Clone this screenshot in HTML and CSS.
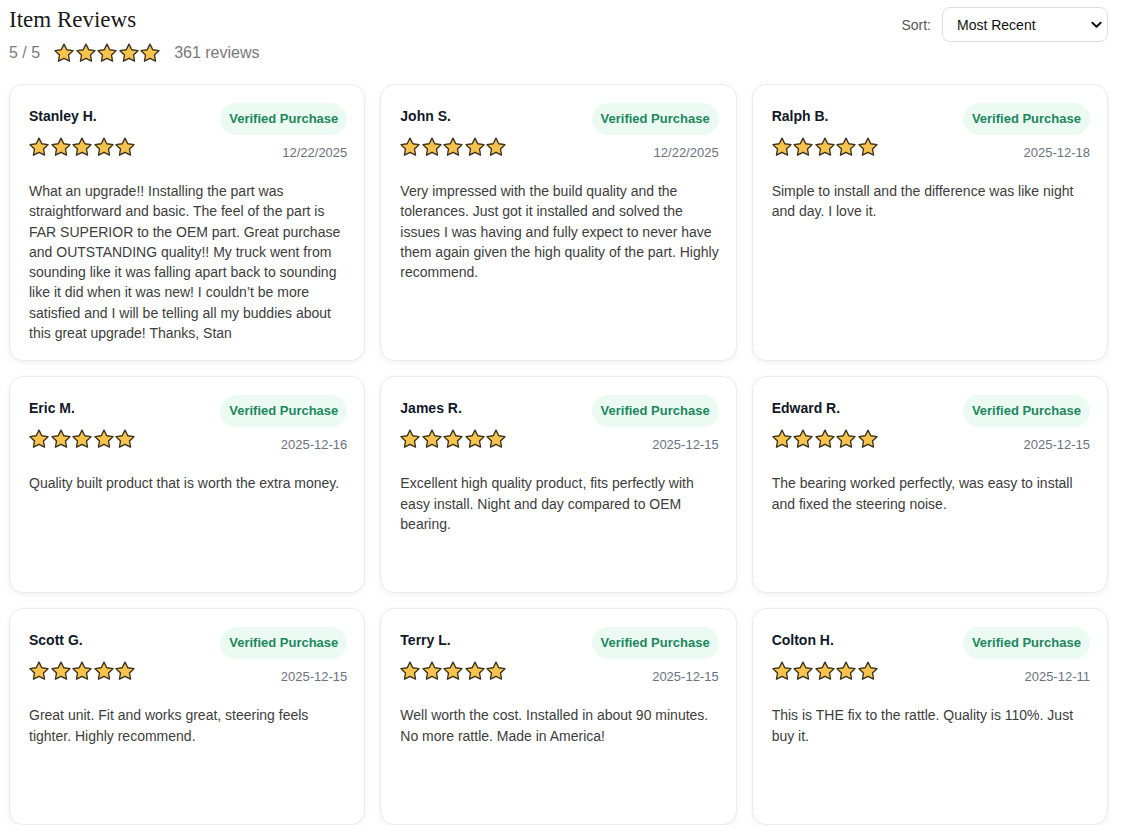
FILE: index.html
```html
<!DOCTYPE html>
<html>
<head>
<meta charset="utf-8">
<link rel="stylesheet" href="styles.css">
</head>
<body>
<svg width="0" height="0" class="defs">
  <defs>
    <symbol id="star" viewBox="1 1 22 22">
      <polygon points="12,2.2 15.05,8.4 21.9,9.4 16.95,14.2 18.1,21 12,17.8 5.9,21 7.05,14.2 2.1,9.4 8.95,8.4" fill="#f7c34c" stroke="#3b3320" stroke-width="1.5" stroke-linejoin="round"/>
    </symbol>
  </defs>
</svg>
<div class="page">
  <header class="top">
    <div class="summary">
      <h1 class="title">Item Reviews</h1>
      <div class="rating">
        <span class="score">5 / 5</span>
        <span class="stars"><svg class="star"><use href="#star"/></svg><svg class="star"><use href="#star"/></svg><svg class="star"><use href="#star"/></svg><svg class="star"><use href="#star"/></svg><svg class="star"><use href="#star"/></svg></span>
        <span class="count">361 reviews</span>
      </div>
    </div>
    <div class="sort">
      <label class="sort-label" for="sort">Sort:</label>
      <div class="select-wrap">
        <select id="sort" class="select"><option>Most Recent</option></select>
        <svg class="chevron" viewBox="0 0 12 8" width="11" height="8"><path d="M1.5 1.5 L6 6 L10.5 1.5" fill="none" stroke="#111" stroke-width="2.2" stroke-linecap="round" stroke-linejoin="round"/></svg>
      </div>
    </div>
  </header>

  <section class="grid">
    <article class="card">
      <div class="card-head">
        <div class="who"><div class="name">Stanley H.</div><div class="stars"><svg class="star"><use href="#star"/></svg><svg class="star"><use href="#star"/></svg><svg class="star"><use href="#star"/></svg><svg class="star"><use href="#star"/></svg><svg class="star"><use href="#star"/></svg></div></div>
        <div class="meta"><span class="badge">Verified Purchase</span><span class="date">12/22/2025</span></div>
      </div>
      <p class="body">What an upgrade!! Installing the part was straightforward and basic. The feel of the part is FAR SUPERIOR to the OEM part. Great purchase and OUTSTANDING quality!! My truck went from sounding like it was falling apart back to sounding like it did when it was new! I couldn’t be more satisfied and I will be telling all my buddies about this great upgrade! Thanks, Stan</p>
    </article>
    <article class="card">
      <div class="card-head">
        <div class="who"><div class="name">John S.</div><div class="stars"><svg class="star"><use href="#star"/></svg><svg class="star"><use href="#star"/></svg><svg class="star"><use href="#star"/></svg><svg class="star"><use href="#star"/></svg><svg class="star"><use href="#star"/></svg></div></div>
        <div class="meta"><span class="badge">Verified Purchase</span><span class="date">12/22/2025</span></div>
      </div>
      <p class="body">Very impressed with the build quality and the tolerances. Just got it installed and solved the issues I was having and fully expect to never have them again given the high quality of the part. Highly recommend.</p>
    </article>
    <article class="card">
      <div class="card-head">
        <div class="who"><div class="name">Ralph B.</div><div class="stars"><svg class="star"><use href="#star"/></svg><svg class="star"><use href="#star"/></svg><svg class="star"><use href="#star"/></svg><svg class="star"><use href="#star"/></svg><svg class="star"><use href="#star"/></svg></div></div>
        <div class="meta"><span class="badge">Verified Purchase</span><span class="date">2025-12-18</span></div>
      </div>
      <p class="body">Simple to install and the difference was like night and day. I love it.</p>
    </article>
    <article class="card">
      <div class="card-head">
        <div class="who"><div class="name">Eric M.</div><div class="stars"><svg class="star"><use href="#star"/></svg><svg class="star"><use href="#star"/></svg><svg class="star"><use href="#star"/></svg><svg class="star"><use href="#star"/></svg><svg class="star"><use href="#star"/></svg></div></div>
        <div class="meta"><span class="badge">Verified Purchase</span><span class="date">2025-12-16</span></div>
      </div>
      <p class="body">Quality built product that is worth the extra money.</p>
    </article>
    <article class="card">
      <div class="card-head">
        <div class="who"><div class="name">James R.</div><div class="stars"><svg class="star"><use href="#star"/></svg><svg class="star"><use href="#star"/></svg><svg class="star"><use href="#star"/></svg><svg class="star"><use href="#star"/></svg><svg class="star"><use href="#star"/></svg></div></div>
        <div class="meta"><span class="badge">Verified Purchase</span><span class="date">2025-12-15</span></div>
      </div>
      <p class="body">Excellent high quality product, fits perfectly with easy install. Night and day compared to OEM bearing.</p>
    </article>
    <article class="card">
      <div class="card-head">
        <div class="who"><div class="name">Edward R.</div><div class="stars"><svg class="star"><use href="#star"/></svg><svg class="star"><use href="#star"/></svg><svg class="star"><use href="#star"/></svg><svg class="star"><use href="#star"/></svg><svg class="star"><use href="#star"/></svg></div></div>
        <div class="meta"><span class="badge">Verified Purchase</span><span class="date">2025-12-15</span></div>
      </div>
      <p class="body">The bearing worked perfectly, was easy to install and fixed the steering noise.</p>
    </article>
    <article class="card">
      <div class="card-head">
        <div class="who"><div class="name">Scott G.</div><div class="stars"><svg class="star"><use href="#star"/></svg><svg class="star"><use href="#star"/></svg><svg class="star"><use href="#star"/></svg><svg class="star"><use href="#star"/></svg><svg class="star"><use href="#star"/></svg></div></div>
        <div class="meta"><span class="badge">Verified Purchase</span><span class="date">2025-12-15</span></div>
      </div>
      <p class="body">Great unit. Fit and works great, steering feels tighter. Highly recommend.</p>
    </article>
    <article class="card">
      <div class="card-head">
        <div class="who"><div class="name">Terry L.</div><div class="stars"><svg class="star"><use href="#star"/></svg><svg class="star"><use href="#star"/></svg><svg class="star"><use href="#star"/></svg><svg class="star"><use href="#star"/></svg><svg class="star"><use href="#star"/></svg></div></div>
        <div class="meta"><span class="badge">Verified Purchase</span><span class="date">2025-12-15</span></div>
      </div>
      <p class="body">Well worth the cost. Installed in about 90 minutes. No more rattle. Made in America!</p>
    </article>
    <article class="card">
      <div class="card-head">
        <div class="who"><div class="name">Colton H.</div><div class="stars"><svg class="star"><use href="#star"/></svg><svg class="star"><use href="#star"/></svg><svg class="star"><use href="#star"/></svg><svg class="star"><use href="#star"/></svg><svg class="star"><use href="#star"/></svg></div></div>
        <div class="meta"><span class="badge">Verified Purchase</span><span class="date">2025-12-11</span></div>
      </div>
      <p class="body">This is THE fix to the rattle. Quality is 110%. Just buy it.</p>
    </article>
  </section>
</div>
</body>
</html>
```
FILE: styles.css
```css
* { box-sizing: border-box; }
html, body { margin: 0; padding: 0; background: #fff; }
body { font-family: "Liberation Sans", Arial, sans-serif; color: #222; }
.defs { position: absolute; width: 0; height: 0; overflow: hidden; }

.page { width: 1099px; margin-left: 9px; padding-top: 5px; }

.top { display: flex; justify-content: space-between; align-items: flex-start; }
.title { margin: 0; font-family: "Liberation Serif", "Times New Roman", serif; font-weight: 400; font-size: 23px; line-height: 30px; color: #1a1a1a; }
.rating { display: flex; align-items: center; height: 22px; margin-top: 7px; font-size: 16px; color: #7a7a7a; }
.rating .stars { margin: 0 14px 0 14px; }
.stars { display: flex; gap: 1.5px; }
.star { width: 20px; height: 20px; display: block; }

.sort { display: flex; align-items: center; margin-top: 2px; gap: 11px; }
.sort-label { font-size: 14px; color: #555; }
.select-wrap { position: relative; }
.select { appearance: none; -webkit-appearance: none; width: 166px; height: 35px; border: 1px solid #dedede; border-radius: 8px; background: #fff; font-family: "Liberation Sans", Arial, sans-serif; font-size: 14px; color: #111; padding: 0 28px 0 14px; display: block; }
.chevron { position: absolute; right: 6px; top: 14px; pointer-events: none; }

.grid { display: grid; grid-template-columns: repeat(3, 1fr); gap: 15px; margin-top: 20px; }
.card { min-height: 217px; border: 1px solid #ebebeb; border-radius: 14px; background: #fff; box-shadow: 0 2px 6px rgba(0,0,0,0.05); padding: 18px 17px 17px 19px; }
.card-head { display: flex; justify-content: space-between; align-items: flex-start; }
.name { margin-top: 3px; font-size: 14px; line-height: 20px; font-weight: 700; color: #111827; }
.who .stars { margin-top: 11px; }
.meta { display: flex; flex-direction: column; align-items: flex-end; }
.badge { display: inline-block; background: #ebfbf3; color: #22875c; font-size: 13px; font-weight: 700; line-height: 18px; padding: 7px 9px; border-radius: 16px; }
.date { margin-top: 9px; font-size: 13px; line-height: 18px; color: #6b7280; }
.body { margin: 19px 0 0; font-size: 14px; line-height: 20.3px; color: #3d3d3d; }
```
